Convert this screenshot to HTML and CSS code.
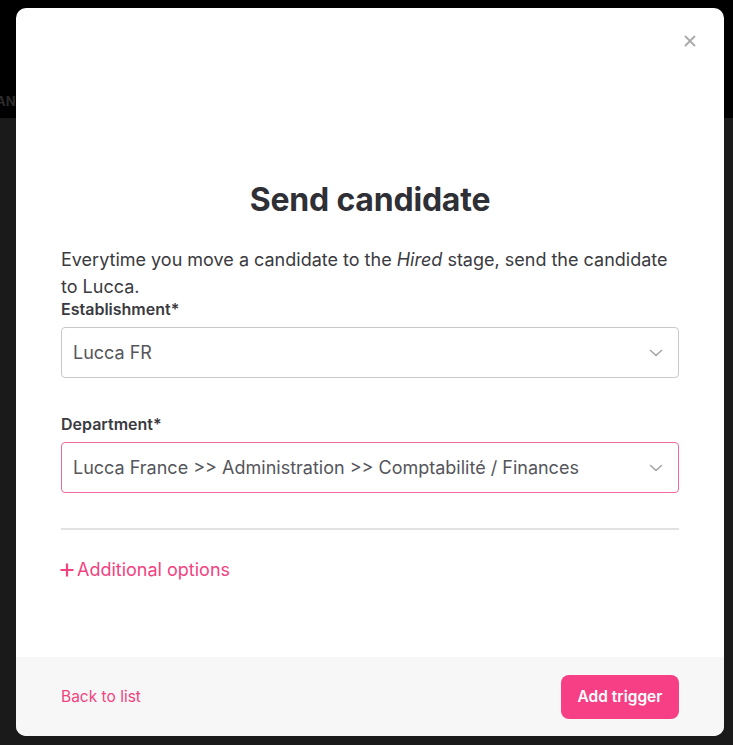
FILE: index.html
```html
<!DOCTYPE html>
<html>
<head>
<meta charset="utf-8">
<link rel="stylesheet" href="styles.css">
</head>
<body>
<div class="backdrop">
  <div class="topbar"><span class="nav-text">ANALYTICS</span></div>
  <div class="lower"></div>
</div>
<div class="modal">
  <button class="close" aria-label="Close">
    <svg width="12" height="12" viewBox="0 0 12 12"><path d="M1.5 1.5L10.5 10.5M10.5 1.5L1.5 10.5" stroke="#a9a9ad" stroke-width="1.8" stroke-linecap="round"/></svg>
  </button>
  <div class="body">
    <h1 class="title">Send candidate</h1>
    <p class="desc">Everytime you move a candidate to the <em>Hired</em> stage, send the candidate to Lucca.</p>
    <div class="field">
      <label class="label">Establishment*</label>
      <div class="select">
        <span class="value">Lucca FR</span>
        <svg class="chev" width="14" height="8" viewBox="0 0 14 8"><path d="M1.5 1.5L7 6.5L12.5 1.5" fill="none" stroke="#a4a4a8" stroke-width="1.6" stroke-linecap="round" stroke-linejoin="round"/></svg>
      </div>
    </div>
    <div class="field">
      <label class="label">Department*</label>
      <div class="select focus">
        <span class="value">Lucca France &gt;&gt; Administration &gt;&gt; Comptabilité / Finances</span>
        <svg class="chev" width="14" height="8" viewBox="0 0 14 8"><path d="M1.5 1.5L7 6.5L12.5 1.5" fill="none" stroke="#a4a4a8" stroke-width="1.6" stroke-linecap="round" stroke-linejoin="round"/></svg>
      </div>
    </div>
    <hr class="divider">
    <a class="more" href="#">
      <svg width="14" height="14" viewBox="0 0 14 14"><path d="M7 0.5V13.5M0.5 7H13.5" stroke="#f2427f" stroke-width="2.2"/></svg>
      <span>Additional options</span>
    </a>
  </div>
  <div class="footer">
    <a class="back" href="#">Back to list</a>
    <button class="primary">Add trigger</button>
  </div>
</div>
</body>
</html>
```

FILE: styles.css
```css
* { box-sizing: border-box; }
html, body { margin: 0; padding: 0; }
body {
  width: 733px;
  height: 745px;
  overflow: hidden;
  font-family: Inter, "Noto Sans", sans-serif;
  background: #1a1a1a;
  position: relative;
}
.backdrop { display: flex; flex-direction: column; height: 100%; }
.topbar {
  height: 118px;
  background: #000;
  display: flex;
  align-items: flex-end;
  padding-bottom: 9px;
}
.nav-text {
  color: #2b2b2b;
  font-weight: 700;
  font-size: 13px;
  margin-left: -4px;
}
.lower { flex: 1; background: #1a1a1a; }

.modal {
  position: absolute;
  left: 16px;
  top: 8px;
  width: 708px;
  height: 728px;
  background: #fff;
  border-radius: 10px;
  overflow: hidden;
  display: flex;
  flex-direction: column;
}
.close {
  position: absolute;
  top: 27px;
  right: 28px;
  border: 0;
  background: none;
  padding: 0;
  width: 12px;
  height: 12px;
  cursor: pointer;
}
.close svg { display: block; }
.body {
  flex: 1;
  padding: 172px 45px 0 45px;
}
.title {
  margin: 0;
  text-align: center;
  font-size: 32px;
  font-weight: 700;
  color: #2f2f36;
  line-height: 40px;
  letter-spacing: -0.2px;
}
.desc {
  margin: 26px 0 0 0;
  font-size: 18px;
  line-height: 27px;
  color: #3a3a40;
}
.desc em { font-style: italic; }
.field { margin-bottom: 36px; }
.label {
  display: block;
  font-size: 16px;
  font-weight: 600;
  color: #3a3a40;
  line-height: 20px;
  margin-bottom: 8px;
}
.desc + .field .label { margin-top: -1px; }
.select {
  height: 51px;
  border: 1px solid #c9c9cc;
  border-radius: 4px;
  display: flex;
  align-items: center;
  justify-content: space-between;
  padding: 0 15px 0 11px;
}
.select.focus { border-color: #f06a9d; }
.value {
  font-size: 18px;
  color: #55555b;
}
.chev { display: block; }
.divider {
  border: 0;
  border-top: 2px solid #e2e2e4;
  margin: -1px 0 0 0;
}
.more {
  display: inline-flex;
  align-items: center;
  gap: 3px;
  margin-top: 29px;
  color: #f2427f;
  font-size: 18px;
  text-decoration: none;
  margin-left: -1px;
}
.more svg { display: block; }
.footer {
  height: 79px;
  background: #f7f7f7;
  display: flex;
  align-items: center;
  justify-content: space-between;
  padding: 0 45px;
}
.back {
  color: #f2427f;
  font-size: 15.5px;
  text-decoration: none;
}
.primary {
  background: #f63f84;
  color: #fff;
  border: 0;
  border-radius: 8px;
  height: 44px;
  width: 118px;
  font-family: Inter, "Noto Sans", sans-serif;
  font-size: 15.5px;
  font-weight: 600;
  cursor: pointer;
}
```
